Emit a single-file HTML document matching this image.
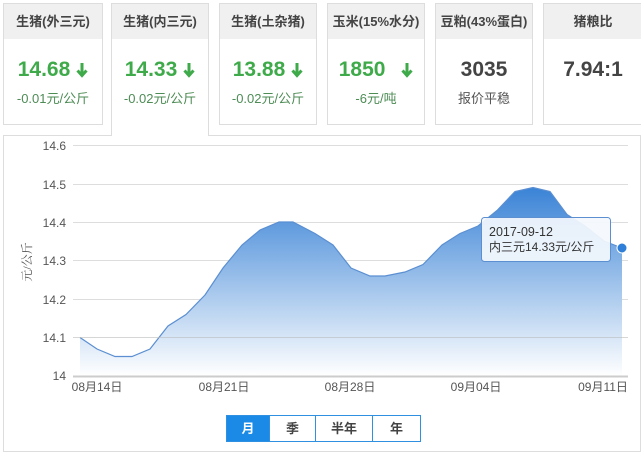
<!DOCTYPE html>
<html><head><meta charset="utf-8"><style>
body{margin:0;width:641px;height:454px;background:#fff;font-family:"Liberation Sans","Noto Sans CJK SC",sans-serif;position:relative;overflow:hidden}
.card{position:absolute;top:3px;height:122px;border:1px solid #ddd;background:#fff;box-sizing:border-box;text-align:center}
.card .h{height:35px;background:#f0f0f0;line-height:35px;font-size:13px;font-weight:bold;color:#444}
.card .v{margin-top:18px;font-size:21px;font-weight:bold;color:#3faa4a;height:26px;line-height:26px}
.card .v.g{color:#444}
.card .s{font-size:13px;color:#4d8c55;margin-top:5px}
.card .s.g{color:#555}
.arr{display:inline-block;vertical-align:middle;margin-left:6px}
.act{top:3px;height:133px;border-bottom:none;z-index:2}
.panel{position:absolute;left:3px;top:135px;width:638px;height:317px;border:1px solid #ddd;box-sizing:border-box}
.btns{position:absolute;left:226px;top:415px;height:27px;display:flex;border:1px solid #2f8fe0;box-sizing:border-box}
.btns div{height:25px;line-height:25px;text-align:center;font-size:13px;font-weight:bold;color:#444;border-left:1px solid #2f8fe0}
.btns div:first-child{border-left:none;background:#1a8ae6;color:#fff}
</style></head><body>
<div class="panel"></div>
<div class="card" style="left:3px;width:100px"><div class="h">生猪(外三元)</div><div class="v">14.68<svg class="arr" width="12" height="16" viewBox="0 0 12 16"><path d="M6 1V13M1.5 8.5L6 13.5L10.5 8.5" stroke="#3faa4a" stroke-width="3" fill="none"/></svg></div><div class="s">-0.01元/公斤</div></div>
<div class="card act" style="left:111px;width:98px"><div class="h" style="font-weight:bold">生猪(内三元)</div><div class="v">14.33<svg class="arr" width="12" height="16" viewBox="0 0 12 16"><path d="M6 1V13M1.5 8.5L6 13.5L10.5 8.5" stroke="#3faa4a" stroke-width="3" fill="none"/></svg></div><div class="s">-0.02元/公斤</div></div>
<div class="card" style="left:219px;width:98px"><div class="h">生猪(土杂猪)</div><div class="v">13.88<svg class="arr" width="12" height="16" viewBox="0 0 12 16"><path d="M6 1V13M1.5 8.5L6 13.5L10.5 8.5" stroke="#3faa4a" stroke-width="3" fill="none"/></svg></div><div class="s">-0.02元/公斤</div></div>
<div class="card" style="left:327px;width:98px"><div class="h">玉米(15%水分)</div><div class="v">1850 <svg class="arr" width="12" height="16" viewBox="0 0 12 16" style="margin-left:10px"><path d="M6 1V13M1.5 8.5L6 13.5L10.5 8.5" stroke="#3faa4a" stroke-width="3" fill="none"/></svg></div><div class="s">-6元/吨</div></div>
<div class="card" style="left:435px;width:98px"><div class="h">豆粕(43%蛋白)</div><div class="v g">3035</div><div class="s g">报价平稳</div></div>
<div class="card" style="left:543px;width:100px"><div class="h">猪粮比</div><div class="v g">7.94:1</div></div>

<svg style="position:absolute;left:0;top:0" width="641" height="454">
<defs><linearGradient id="gr" x1="0" y1="0" x2="0" y2="1"><stop offset="0" stop-color="#3a83d6"/><stop offset="1" stop-color="#fff"/></linearGradient></defs>
<g stroke="#ddd" stroke-width="1">
<line x1="73" y1="145.5" x2="628" y2="145.5"/><line x1="73" y1="184.5" x2="628" y2="184.5"/><line x1="73" y1="222.5" x2="628" y2="222.5"/><line x1="73" y1="260.5" x2="628" y2="260.5"/><line x1="73" y1="299.5" x2="628" y2="299.5"/>
</g>
<path d="M80,376 L80,337.5 L97,349 L115,356.5 L132,356.5 L150,349 L168,326 L186,314.5 L205,295 L223,268 L242,245 L260,230 L279,222 L293,222 L315,233.5 L333,245 L351,268 L370,276 L385,276 L405,272 L423,264.5 L442,245 L460,233.5 L478,226 L497,210.5 L515,191.5 L533,187.5 L550,191.5 L567,214.5 L585,226 L604,241 L622,248 L622,376 Z" fill="url(#gr)"/>
<path d="M80,337.5 L97,349 L115,356.5 L132,356.5 L150,349 L168,326 L186,314.5 L205,295 L223,268 L242,245 L260,230 L279,222 L293,222 L315,233.5 L333,245 L351,268 L370,276 L385,276 L405,272 L423,264.5 L442,245 L460,233.5 L478,226 L497,210.5 L515,191.5 L533,187.5 L550,191.5 L567,214.5 L585,226 L604,241 L622,248" fill="none" stroke="#5b8fd1" stroke-width="1.2"/>
<line x1="73" y1="337.5" x2="628" y2="337.5" stroke="#bbb" stroke-opacity=".6"/>
<line x1="73" y1="376.5" x2="628" y2="376.5" stroke="#ccc" stroke-width="2"/>
<g font-size="12" fill="#555" text-anchor="end" font-family="Liberation Sans,sans-serif">
<text x="66" y="150">14.6</text><text x="66" y="189">14.5</text><text x="66" y="227">14.4</text><text x="66" y="265">14.3</text><text x="66" y="304">14.2</text><text x="66" y="342">14.1</text><text x="66" y="380">14</text>
</g>
<g font-size="12" fill="#555" text-anchor="middle" font-family="Liberation Sans,Noto Sans CJK SC,sans-serif">
<text x="97" y="391">08月14日</text><text x="224" y="391">08月21日</text><text x="350" y="391">08月28日</text><text x="476" y="391">09月04日</text><text x="603" y="391">09月11日</text>
</g>
<text transform="translate(31,262) rotate(-90)" font-size="12" fill="#555" text-anchor="middle" font-family="Liberation Serif,Noto Serif CJK SC,serif">元/公斤</text>
<circle cx="622" cy="248" r="5" fill="#2f7fd8" stroke="#fff" stroke-width="1"/>
<rect x="481.5" y="217.5" width="129" height="44" rx="3" fill="#f4f8fd" fill-opacity=".92" stroke="#5b8fd1"/>
<text x="489" y="236" font-size="12.5" fill="#333" font-family="Liberation Sans,sans-serif">2017-09-12</text>
<text x="489" y="251" font-size="12" fill="#333" font-family="Liberation Sans,Noto Sans CJK SC,sans-serif">内三元14.33元/公斤</text>
</svg>
<div class="btns"><div style="width:42px">月</div><div style="width:45px">季</div><div style="width:56px">半年</div><div style="width:47px">年</div></div>
</body></html>
